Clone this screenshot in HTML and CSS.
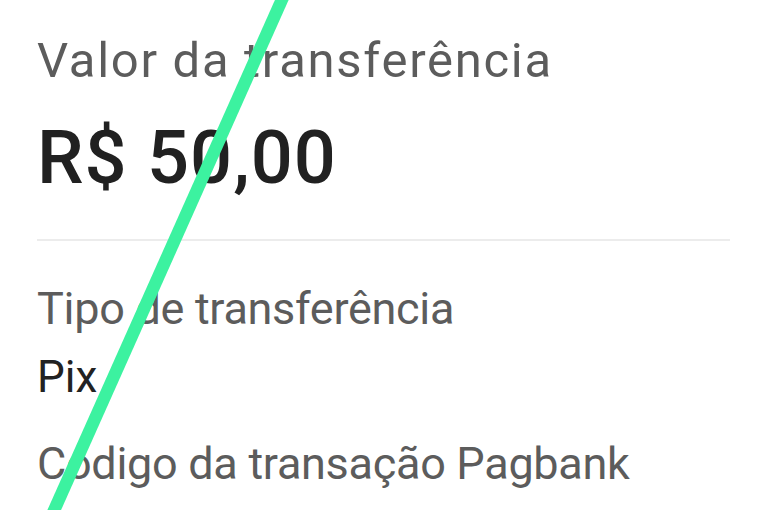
FILE: index.html
```html
<!DOCTYPE html>
<html lang="pt-BR">
<head>
    <meta charset="UTF-8">
    <meta name="viewport" content="width=device-width, initial-scale=1.0">
    <title>Comprovante</title>
    <link rel="stylesheet" href="styles.css">
</head>
<body>

    <div class="comprovante">
        <p class="rotulo rotulo-valor">Valor da transferência</p>
        <p class="valor">R$ 50,00</p>

        <hr class="divisor">

        <p class="rotulo rotulo-tipo">Tipo de transferência</p>
        <p class="dado">Pix</p>

        <p class="rotulo rotulo-codigo">Codigo da transação Pagbank</p>
    </div>

    <svg class="risco" width="765" height="510" viewBox="0 0 765 510">
        <line x1="284" y1="-5" x2="52" y2="515" stroke="#3cf2a0" stroke-width="12.5" />
    </svg>

</body>
</html>
```

FILE: styles.css
```css
* {
    margin: 0;
    padding: 0;
    box-sizing: border-box;
}

body {
    font-family: Roboto, "Liberation Sans", sans-serif;
    background-color: #fff;
    width: 765px;
    height: 510px;
    overflow: hidden;
}

.comprovante {
    padding: 33px 35px 0 37px;
}

.rotulo {
    color: #5c5c5c;
    font-size: 45px;
    line-height: 54px;
    letter-spacing: -0.3px;
}

.rotulo-valor {
    font-size: 49px;
    line-height: 56px;
    letter-spacing: 1.7px;
}

.valor {
    margin-top: 27px;
    color: #212121;
    font-size: 74px;
    line-height: 84px;
    font-weight: 500;
    letter-spacing: 1px;
}

.divisor {
    margin-top: 39px;
    border: none;
    height: 2px;
    background-color: #ececec;
}

.rotulo-tipo {
    margin-top: 41px;
}

.dado {
    margin-top: 15px;
    color: #222;
    font-size: 44px;
    line-height: 52px;
}

.rotulo-codigo {
    margin-top: 34px;
}

.risco {
    position: absolute;
    top: 0;
    left: 0;
    pointer-events: none;
}
```
